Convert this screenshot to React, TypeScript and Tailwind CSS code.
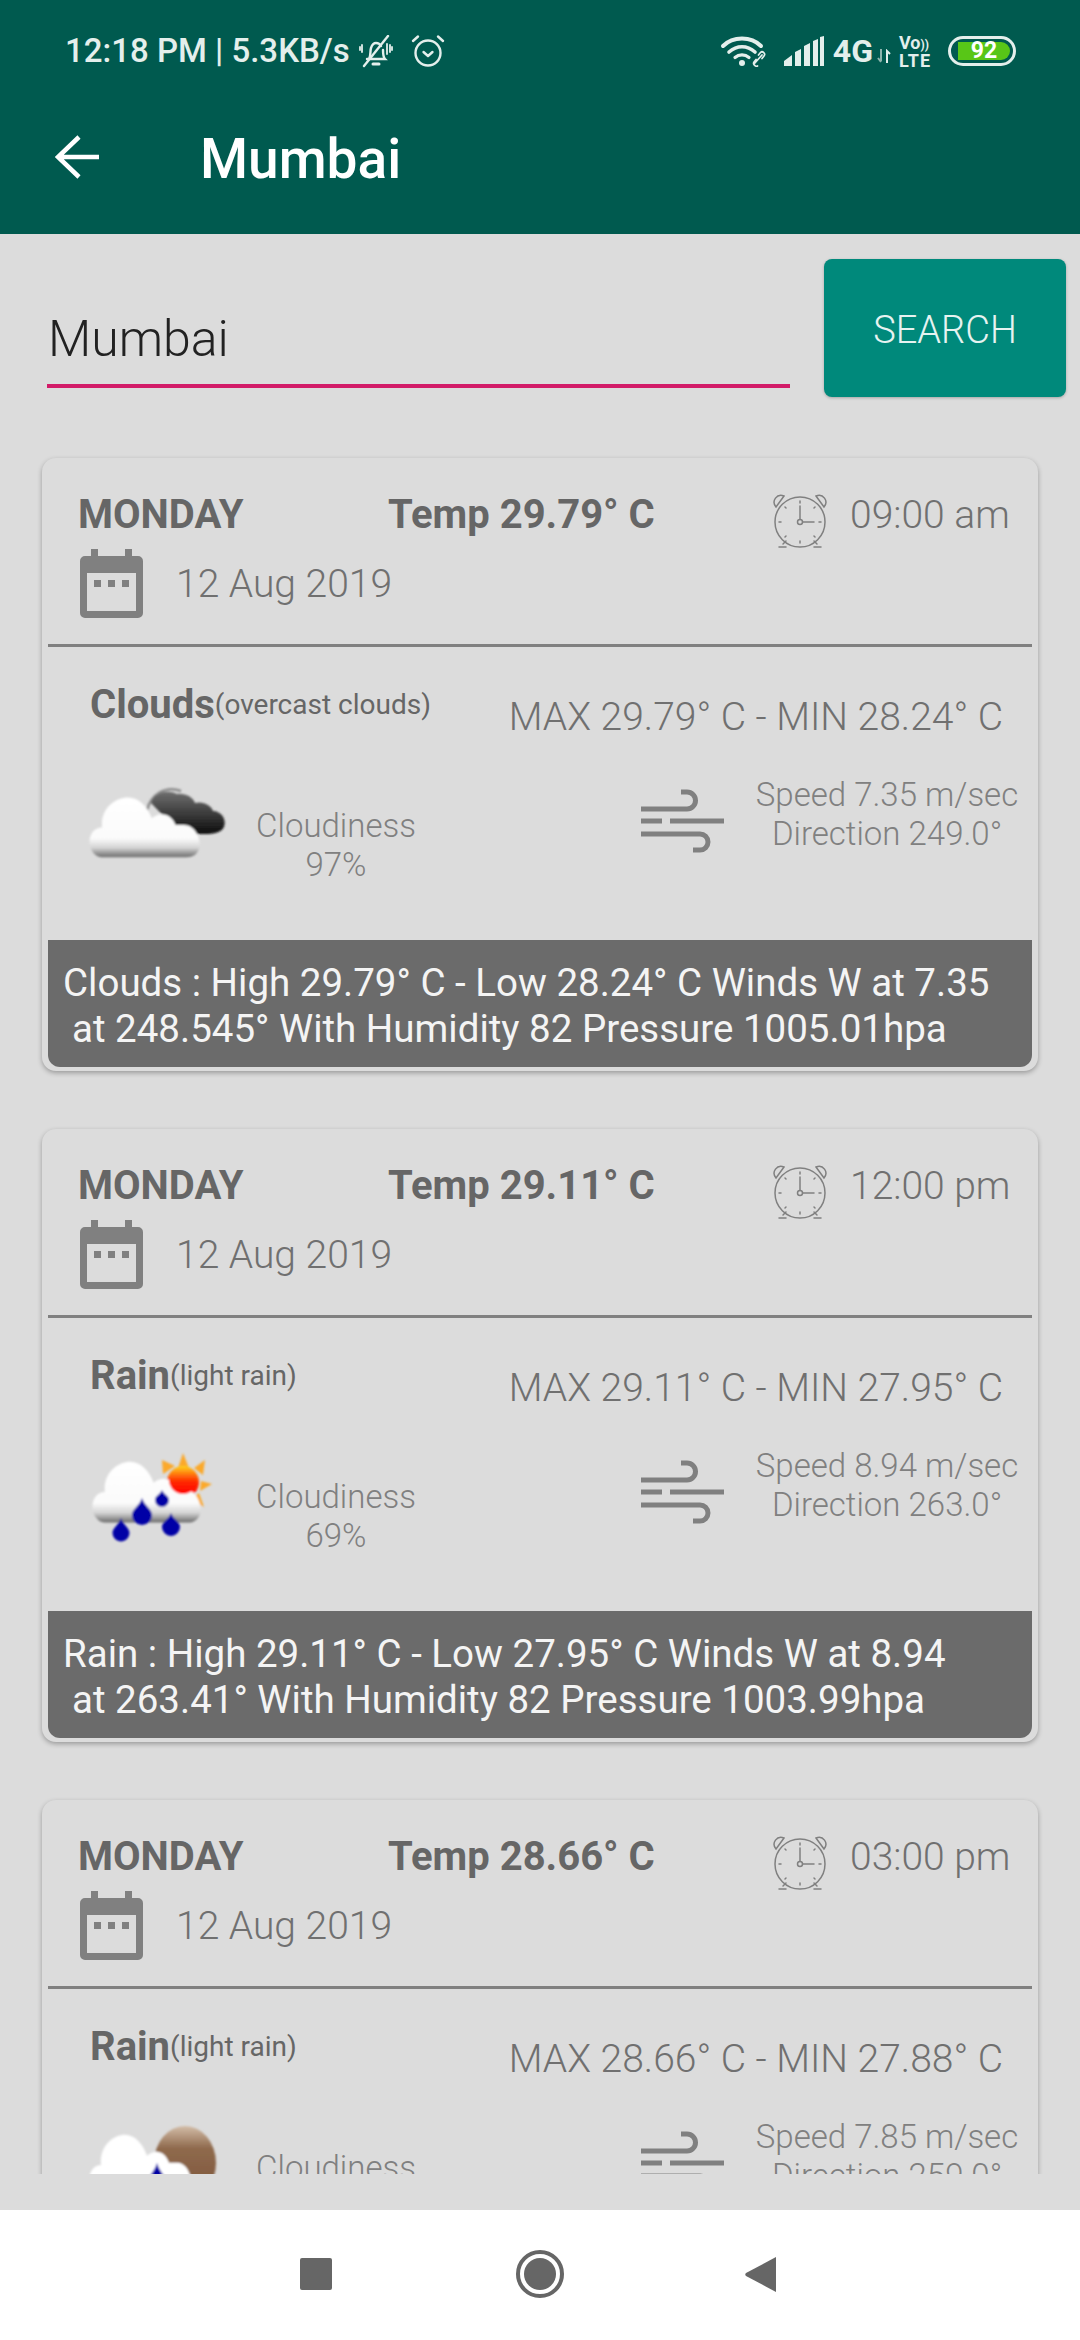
import { useId } from "react";

type Forecast = {
  temp: string;
  time: string;
  main: string;
  detail: string;
  max: string;
  min: string;
  cloudiness: string;
  speed: string;
  direction: string;
  summary: string[];
  icon: "clouds" | "rainSun" | "rainMoon";
};

const FORECASTS: Forecast[] = [
  {
    temp: "29.79",
    time: "09:00 am",
    main: "Clouds",
    detail: "(overcast clouds)",
    max: "29.79",
    min: "28.24",
    cloudiness: "97%",
    speed: "7.35",
    direction: "249.0",
    summary: [
      "Clouds : High 29.79° C - Low 28.24° C Winds W at 7.35",
      "at 248.545° With Humidity 82 Pressure 1005.01hpa",
    ],
    icon: "clouds",
  },
  {
    temp: "29.11",
    time: "12:00 pm",
    main: "Rain",
    detail: "(light rain)",
    max: "29.11",
    min: "27.95",
    cloudiness: "69%",
    speed: "8.94",
    direction: "263.0",
    summary: [
      "Rain : High 29.11° C - Low 27.95° C Winds W at 8.94",
      "at 263.41° With Humidity 82 Pressure 1003.99hpa",
    ],
    icon: "rainSun",
  },
  {
    temp: "28.66",
    time: "03:00 pm",
    main: "Rain",
    detail: "(light rain)",
    max: "28.66",
    min: "27.88",
    cloudiness: "75%",
    speed: "7.85",
    direction: "259.0",
    summary: [
      "Rain : High 28.66° C - Low 27.88° C Winds W at 7.85",
      "at 259.0° With Humidity 82 Pressure 1003.99hpa",
    ],
    icon: "rainMoon",
  },
];

function BellMuteIcon() {
  return (
    <svg width="34" height="33" viewBox="0 0 34 33" fill="none" stroke="#e4efec" strokeWidth="2.4" strokeLinecap="round">
      <path d="M10 24c2-3 1-8 2-11 1-3 3-5 5-5s4 1 5 3M24 15c0 4 0 7 2 9H8" />
      <path d="M14 29h6" strokeWidth="3" />
      <path d="M29 1 5 31" />
      <path d="M3 10v7M1 12v3M31 10v7M33 12v3M28 9v10" strokeWidth="1.8" />
    </svg>
  );
}

function AlarmIcon() {
  return (
    <svg width="34" height="34" viewBox="0 0 34 34" fill="none" stroke="#e4efec" strokeWidth="2.4" strokeLinecap="round" strokeLinejoin="round">
      <circle cx="17" cy="19" r="12.5" />
      <path d="M12.5 18l4.5 4 4.500-4" />
      <path d="M2 7l5-4.500M32 7l-5-4.500" />
    </svg>
  );
}

function WifiIcon() {
  return (
    <svg width="48" height="32" viewBox="0 0 46 32" fill="none" stroke="#e4efec" strokeLinecap="round">
      <path d="M2 11C12 1 30 1 40 11" strokeWidth="4" />
      <path d="M8 17c8-7 18-7 26 0" strokeWidth="3.600" />
      <path d="M14 22.500c4-3.500 10-3.500 14 0" strokeWidth="3.200" />
      <circle cx="21" cy="28" r="3" fill="#e4efec" stroke="none" />
      <path d="M33 29l8-9M36.500 31c-2 1-5-2-3.500-4l2-2.500M37.500 20l2-2.500c2-2 5.500 1 3.500 3.500l-2 2.500" strokeWidth="1.700" />
    </svg>
  );
}

function SignalIcon() {
  return (
    <svg width="40" height="30" viewBox="0 0 40 30" fill="#e4efec">
      <path d="M0 30v-5l8-6v11zM11 30V16l6-3v17zM20 30V10l6-3v23zM29 30V5l5-2v27zM36 30V1l4-1v30z" />
    </svg>
  );
}

function VolteIcon() {
  return (
    <div className="flex w-[33px] flex-col font-['Roboto',sans-serif] text-[18px] leading-[15px] font-bold text-[#e4efec]">
      <span className="whitespace-nowrap">Vo<span className="text-[12px]">))</span></span>
      <span className="tracking-[1px]">LTE</span>
    </div>
  );
}

function StatusBar() {
  return (
    <div className="flex h-[98px] items-center pt-[4px] pr-[64px] pl-[65px] font-['Roboto',sans-serif] text-[#e4efec]">
      <span className="text-[33px] font-medium whitespace-nowrap">12:18 PM | 5.3KB/s</span>
      <span className="ml-[9px] flex"><BellMuteIcon /></span>
      <span className="ml-[18px] flex"><AlarmIcon /></span>
      <span className="ml-auto flex"><WifiIcon /></span>
      <span className="ml-[16px] flex"><SignalIcon /></span>
      <span className="ml-[9px] text-[32px] leading-none font-bold">4G</span>
      <svg className="mt-[10px] ml-[4px]" width="14" height="14" viewBox="0 0 14 14" fill="none" strokeWidth="2">
        <path d="M4 0v12M1 9l3 4" stroke="#8db5ad" />
        <path d="M10 14V2l3 3" stroke="#e4efec" />
      </svg>
      <span className="ml-[8px] flex"><VolteIcon /></span>
      <div className="ml-[16px] flex h-[30px] w-[68px] items-center rounded-full border-[3px] border-[#e4efec] pr-[3px] pl-[7px]">
        <div className="flex h-[18px] w-[52px] items-center justify-center rounded-r-full bg-[#58c617] font-['Roboto',sans-serif] text-[23px] font-bold text-white">
          92
        </div>
      </div>
    </div>
  );
}

function TopBar() {
  return (
    <div className="flex h-[136px] flex-none items-center pb-[18px] pl-[55px]">
      <svg width="44" height="44" viewBox="0 0 44 44" fill="none" stroke="white" strokeWidth="4.500">
        <path d="M44 22H4M24 2 3 22l21 20" />
      </svg>
      <h1 className="mt-[4px] ml-[101px] font-['Roboto',sans-serif] text-[55px] leading-none font-medium text-white">Mumbai</h1>
    </div>
  );
}

function SearchBar() {
  return (
    <div className="flex h-[210px] flex-none items-start pt-[25px] pl-[47px]">
      <div className="mt-[31px] h-[98px] w-[743px] border-b-[4px] border-[#d21b68] pt-[15px] pl-[1px] font-['Roboto',sans-serif] text-[50px] leading-[68px] font-light text-[#222]">
        Mumbai
      </div>
      <button
        type="button"
        className="ml-[34px] h-[138px] w-[242px] rounded-[8px] bg-[#00897b] pt-[4px] font-['Roboto',sans-serif] text-[38px] font-light text-[#e6f3f1] shadow-[0_1px_3px_rgba(0,0,0,0.25)]"
      >
        SEARCH
      </button>
    </div>
  );
}

function CalendarIcon() {
  return (
    <svg width="63" height="69" viewBox="0 0 63 69" fill="#808080">
      <path d="M11 0h7v7h27V0h7v7h6a5 5 0 0 1 5 5v52a5 5 0 0 1-5 5H5a5 5 0 0 1-5-5V12a5 5 0 0 1 5-5h6zM7 24v38h49V24z" fillRule="evenodd" />
      <path d="M14 31h7v7h-7zM28 31h7v7h-7zM42 31h7v7h-7z" />
    </svg>
  );
}

function ClockIcon() {
  return (
    <svg width="56" height="56" viewBox="0 0 56 56" fill="none" stroke="#808080" strokeWidth="1.500" strokeLinecap="round">
      <circle cx="28" cy="30" r="25" />
      <path d="M4 15C-1 9 5 1 12 4ZM52 15c5-6-1-14-8-11Z" />
      <path d="M11 52l3-3M45 52l-3-3M7 55h7M42 55h7" />
      <circle cx="28" cy="30" r="2.500" />
      <path d="M28 27V14M31 30h11" />
      <path d="M28 9v2M28 49v2M7 30h2M47 30h2M13 15l1 1M43 15l-1 1M13 45l1-1M43 45l-1-1" />
    </svg>
  );
}

function WindIcon() {
  return (
    <svg width="85" height="64" viewBox="0 0 85 64" fill="none" stroke="#808080" strokeWidth="5">
      <path d="M0 20h46a8.500 8.500 0 0 0 0-17h-6" />
      <path d="M0 32h21M29 32h54" />
      <path d="M0 45h59a8 8 0 0 1 0 16h-7" />
    </svg>
  );
}

const CLOUD_PATH =
  "M8 60C-2 52 2 36 14 36 12 20 26 10 38 10c10 0 18 8 22 18 8-6 18-4 22 6l8 0c12 0 16 16 14 20-2 6-6 8-12 8H18C14 62 10 62 8 60Z";

function Drop({ cx, cy, r, top }: { cx: number; cy: number; r: number; top: number }) {
  const mid = top + (cy - top) * 0.5;
  return (
    <path
      d={`M${cx} ${top}C${cx + r * 0.3} ${mid} ${cx + r} ${cy - r * 0.6} ${cx + r} ${cy}A${r} ${r} 0 0 1 ${cx - r} ${cy}C${cx - r} ${cy - r * 0.6} ${cx - r * 0.3} ${mid} ${cx} ${top}Z`}
      fill="#0404a6"
    />
  );
}

function WeatherIcon({ kind }: { kind: Forecast["icon"] }) {
  const id = useId();
  const white = `${id}-white`;
  const dark = `${id}-dark`;
  const sun = `${id}-sun`;
  const moon = `${id}-moon`;
  const blur = `${id}-blur`;

  return (
    <svg width="160" height="120" viewBox="0 0 160 120" className="mt-[10px] flex-none">
      <defs>
        <linearGradient id={white} x1="0" y1="0" x2="0" y2="1">
          <stop offset="0" stopColor="#ffffff" />
          <stop offset="0.68" stopColor="#fbfbfb" />
          <stop offset="0.84" stopColor="#d4d4d4" />
          <stop offset="1" stopColor="#6a6a6a" />
        </linearGradient>
        <linearGradient id={dark} x1="0" y1="0" x2="0" y2="1">
          <stop offset="0" stopColor="#6f6f6f" />
          <stop offset="1" stopColor="#0c0c0c" />
        </linearGradient>
        <linearGradient id={sun} x1="0" y1="0" x2="0" y2="1">
          <stop offset="0" stopColor="#ffd21c" />
          <stop offset="0.55" stopColor="#ff2a00" />
          <stop offset="1" stopColor="#ff0000" />
        </linearGradient>
        <linearGradient id={moon} x1="0" y1="0" x2="0" y2="1">
          <stop offset="0" stopColor="#d3bda8" />
          <stop offset="0.3" stopColor="#8f6a4d" />
          <stop offset="1" stopColor="#7b5238" />
        </linearGradient>
        <filter id={blur} x="-10%" y="-10%" width="120%" height="120%">
          <feGaussianBlur stdDeviation="0.9" />
        </filter>
      </defs>
      {kind === "clouds" && (
        <g filter={`url(#${blur})`}>
          <path d="M66 49C70 34 84 24 100 30" fill="none" stroke="#8b8b8b" strokeWidth="2.500" />
          <path d="M70 42C72 32 86 28 96 33 104 32 112 36 114 42 122 40 130 44 132 50 140 50 146 58 143 66 140 72 132 73 124 73L100 73Z" fill={`url(#${dark})`} />
          <g transform="translate(6 25) scale(1.080 1.150)">
            <path d={CLOUD_PATH} fill={`url(#${white})`} />
          </g>
        </g>
      )}
      {kind === "rainSun" && (
        <g filter={`url(#${blur})`}>
          <g fill="#fba92a">
            <path d="M97 36l5-15 6 15zM82 42l-1-14 13 6zM113 36l11-8-2 15zM120 49l11 3-12 7zM118 61l5 14-13-8z" />
          </g>
          <circle cx="102" cy="50" r="16" fill={`url(#${sun})`} />
          <g transform="translate(9 18) scale(1.060 1.170)">
            <path d={CLOUD_PATH} fill={`url(#${white})`} />
          </g>
          <circle cx="102" cy="48" r="14" fill={`url(#${sun})`} />
          <Drop cx={61} cy={83} r={10} top={66} />
          <Drop cx={81} cy={68} r={7} top={58} />
          <Drop cx={40} cy={101} r={8.500} top={86} />
          <Drop cx={90} cy={95} r={9} top={81} />
        </g>
      )}
      {kind === "rainMoon" && (
        <g filter={`url(#${blur})`}>
          <ellipse cx="104" cy="60" rx="31" ry="37" fill={`url(#${moon})`} />
          <g transform="translate(6 20) scale(1 1.170)">
            <path d={CLOUD_PATH} fill="#ffffff" />
          </g>
          <Drop cx={76} cy={80} r={10} top={60} />
        </g>
      )}
    </svg>
  );
}

function ForecastCard({ item }: { item: Forecast }) {
  return (
    <article className="h-[613px] w-[996px] flex-none rounded-[14px] bg-[#dcdcdc] px-[6px] pb-[4px] font-['Roboto',sans-serif] shadow-[0_2px_5px_rgba(0,0,0,0.3)]">
      <div className="box-content flex h-[186px] flex-col border-b-[3px] border-[#808080]">
        <div className="flex h-[116px] items-start pt-[34px] pl-[30px]">
          <span className="w-[310px] text-[40px] leading-[46px] font-bold text-[#666]">MONDAY</span>
          <span className="w-[384px] text-[40px] leading-[46px] font-bold whitespace-nowrap text-[#666]">Temp {item.temp}° C</span>
          <span className="flex"><ClockIcon /></span>
          <span className="ml-[22px] text-[39px] leading-[46px] font-light whitespace-nowrap text-[#707070]">{item.time}</span>
        </div>
        <div className="-mt-[25px] flex items-center pl-[32px]">
          <CalendarIcon />
          <span className="ml-[33px] text-[39px] leading-[46px] font-light text-[#707070]">12 Aug 2019</span>
        </div>
      </div>
      <div className="flex h-[293px] flex-col">
        <div className="flex h-[104px] items-start justify-between pt-[35px] pr-[29px] pl-[42px]">
          <span className="flex items-center whitespace-nowrap text-[#666]">
            <span className="text-[40px] leading-[46px] font-bold">{item.main}</span>
            <span className="text-[28px] leading-[46px]">{item.detail}</span>
          </span>
          <span className="mt-[12px] text-[39px] leading-[46px] font-light whitespace-nowrap text-[#707070]">
            MAX {item.max}° C - MIN {item.min}° C
          </span>
        </div>
        <div className="flex items-start pl-[33px]">
          <WeatherIcon kind={item.icon} />
          <div className="mt-[55px] w-[190px] text-center text-[33px] leading-[39px] font-light text-[#808080]">
            <div>{"Cloudiness"}</div>
            <div>{item.cloudiness}</div>
          </div>
          <span className="mt-[38px] ml-[210px] flex"><WindIcon /></span>
          <div className="mt-[24px] ml-[26px] w-[270px] text-center text-[33px] leading-[39px] font-light whitespace-nowrap text-[#808080]">
            <div>Speed {item.speed} m/sec</div>
            <div>Direction {item.direction}°</div>
          </div>
        </div>
      </div>
      <div className="h-[127px] rounded-b-[12px] bg-[#6b6b6b] pt-[20px] pl-[15px] text-[38.500px] leading-[46px] whitespace-nowrap text-[#f4f4f4]">
        <div>{item.summary[0]}</div>
        <div className="pl-[9px]">{item.summary[1]}</div>
      </div>
    </article>
  );
}

function NavBar() {
  return (
    <nav className="flex h-[130px] flex-none items-start bg-white pt-[40px]">
      <div className="mt-[8px] ml-[300px] h-[32px] w-[32px] rounded-[2px] bg-[#666]" />
      <div className="ml-[184px] flex h-[48px] w-[48px] items-center justify-center rounded-full border-[4px] border-[#666]">
        <div className="h-[32px] w-[32px] rounded-full bg-[#666]" />
      </div>
      <svg className="mt-[6px] ml-[181px]" width="32" height="37" viewBox="0 0 32 37" fill="#666">
        <path d="M31 1v35L1 20c-1-1-1-2 0-3z" />
      </svg>
    </nav>
  );
}

export default function App() {
  return (
    <div className="flex h-[2340px] w-[1080px] flex-col overflow-hidden bg-[#dcdcdc]">
      <header className="flex-none bg-[#005a4f]">
        <StatusBar />
        <TopBar />
      </header>
      <SearchBar />
      <main className="mb-[36px] flex min-h-0 flex-1 flex-col items-center gap-[58px] overflow-hidden pt-[14px]">
        {FORECASTS.map((item) => (
          <ForecastCard key={item.time} item={item} />
        ))}
      </main>
      <NavBar />
    </div>
  );
}
